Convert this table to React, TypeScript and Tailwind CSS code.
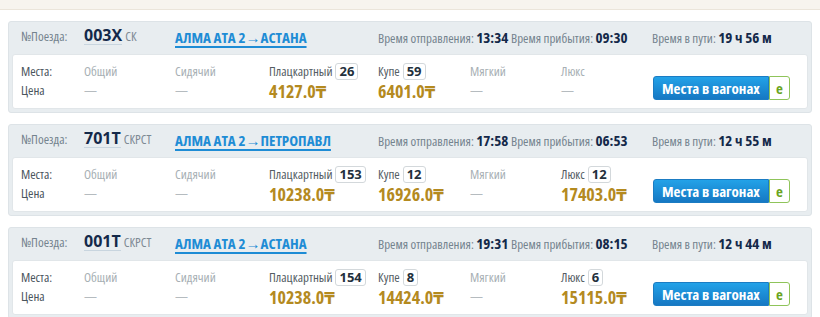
import React from "react";

type Seat = { name: string; count?: number; price?: string };

interface Train {
  number: string;
  kind: string;
  route: string;
  depart: string;
  arrive: string;
  duration: string;
  seats: Seat[];
}

const trains: Train[] = [
  {
    number: "003X",
    kind: "СК",
    route: "АЛМА АТА 2→АСТАНА",
    depart: "13:34",
    arrive: "09:30",
    duration: "19 ч 56 м",
    seats: [
      { name: "Общий" },
      { name: "Сидячий" },
      { name: "Плацкартный", count: 26, price: "4127.0" },
      { name: "Купе", count: 59, price: "6401.0" },
      { name: "Мягкий" },
      { name: "Люкс" },
    ],
  },
  {
    number: "701Т",
    kind: "СКРСТ",
    route: "АЛМА АТА 2→ПЕТРОПАВЛ",
    depart: "17:58",
    arrive: "06:53",
    duration: "12 ч 55 м",
    seats: [
      { name: "Общий" },
      { name: "Сидячий" },
      { name: "Плацкартный", count: 153, price: "10238.0" },
      { name: "Купе", count: 12, price: "16926.0" },
      { name: "Мягкий" },
      { name: "Люкс", count: 12, price: "17403.0" },
    ],
  },
  {
    number: "001Т",
    kind: "СКРСТ",
    route: "АЛМА АТА 2→АСТАНА",
    depart: "19:31",
    arrive: "08:15",
    duration: "12 ч 44 м",
    seats: [
      { name: "Общий" },
      { name: "Сидячий" },
      { name: "Плацкартный", count: 154, price: "10238.0" },
      { name: "Купе", count: 8, price: "14424.0" },
      { name: "Мягкий" },
      { name: "Люкс", count: 6, price: "15115.0" },
    ],
  },
];

const seatWidths = ["w-[91px]", "w-[94px]", "w-[109px]", "w-[92px]", "w-[91px]", "w-[92px]"];

const Value = ({ children }: { children: React.ReactNode }) => (
  <b className="text-[15px] text-[#14294a] [font-stretch:85%]">{children}</b>
);

const TrainCard = ({ train }: { train: Train }) => {
  return (
    <div className="mx-2 mb-[11px] rounded-[3px] border border-[#dde3e7] bg-[#e8edf0] px-[3px] pb-[3px]">
      {/* Header */}
      <div className="flex h-[32px] items-center whitespace-nowrap pb-[2px] pl-[9px] text-[13px] text-[#74838e]">
        <div className="w-[63px]">№Поезда:</div>
        <div className="flex w-[91px] items-baseline">
          <span className="border-b border-[#c8d5df] text-[16px] font-bold leading-[17px] text-[#14294a] [font-stretch:88%]">
            {train.number}
          </span>
          <span className="ml-[3px] text-[#7d8993]">{train.kind}</span>
        </div>
        <div className="w-[203px]">
          <a className="text-[15px] font-bold text-[#1e8cd5] underline decoration-[1.5px] underline-offset-[3px]">
            {train.route}
          </a>
        </div>
        <div className="w-[133px]">
          Время отправления: <Value>{train.depart}</Value>
        </div>
        <div className="w-[141px]">
          Время прибытия: <Value>{train.arrive}</Value>
        </div>
        <div>
          Время в пути: <Value>{train.duration}</Value>
        </div>
      </div>

      {/* Body */}
      <div className="flex h-[55px] whitespace-nowrap rounded-[3px] border border-[#e1e6e9] bg-white pl-[8px] pt-[7px] text-[13px]">
        <div className="w-[63px] text-[#4a555d]">
          <div className="flex h-[19px] items-center">Места:</div>
          <div className="flex h-[20px] items-center">Цена</div>
        </div>
        {train.seats.map((s, i) => (
          <div key={i} className={seatWidths[i]}>
            <div
              className={`flex h-[19px] items-center ${s.count ? "text-[#545d64]" : "text-[#a7afb4]"}`}
            >
              {s.name}
              {s.count !== undefined && (
                <span className="ml-[3px] flex h-[17px] items-center rounded-[3px] border border-[#d3d8db] px-[3px] text-[13px] font-bold text-[#23303c] [font-stretch:88%]">
                  {s.count}
                </span>
              )}
            </div>
            <div className="flex h-[20px] items-center">
              {s.price ? (
                <span className="text-[18px] font-bold text-[#b48a1f]">
                  {s.price}
                  <span className="font-['DejaVu_Sans',sans-serif] text-[15px] [font-stretch:normal]">₸</span>
                </span>
              ) : (
                <span className="text-[#b5bbbf]">—</span>
              )}
            </div>
          </div>
        ))}
        <div className="flex pt-[14px]">
          <button className="flex h-[24px] items-center rounded-l-[3px] border border-[#1b7cc3] bg-gradient-to-b from-[#23a2e8] to-[#1678c3] px-[8px] text-[15px] font-bold text-white [font-stretch:85%]">
            Места в вагонах
          </button>
          <div className="flex h-[24px] w-[21px] items-center justify-center rounded-r-[3px] border border-[#8fc45a] bg-white text-[15px] font-bold text-[#6aa51e]">
            e
          </div>
        </div>
      </div>
    </div>
  );
};

export default function App() {
  return (
    <div className="h-[317px] w-[820px] overflow-hidden bg-white font-['Open_Sans',sans-serif] [font-stretch:75%]">
      <div className="mb-[11px] h-[10px] border-b border-[#ebe5da] bg-[#f7f4ee]" />
      {trains.map((t) => (
        <TrainCard key={t.number} train={t} />
      ))}
    </div>
  );
}
